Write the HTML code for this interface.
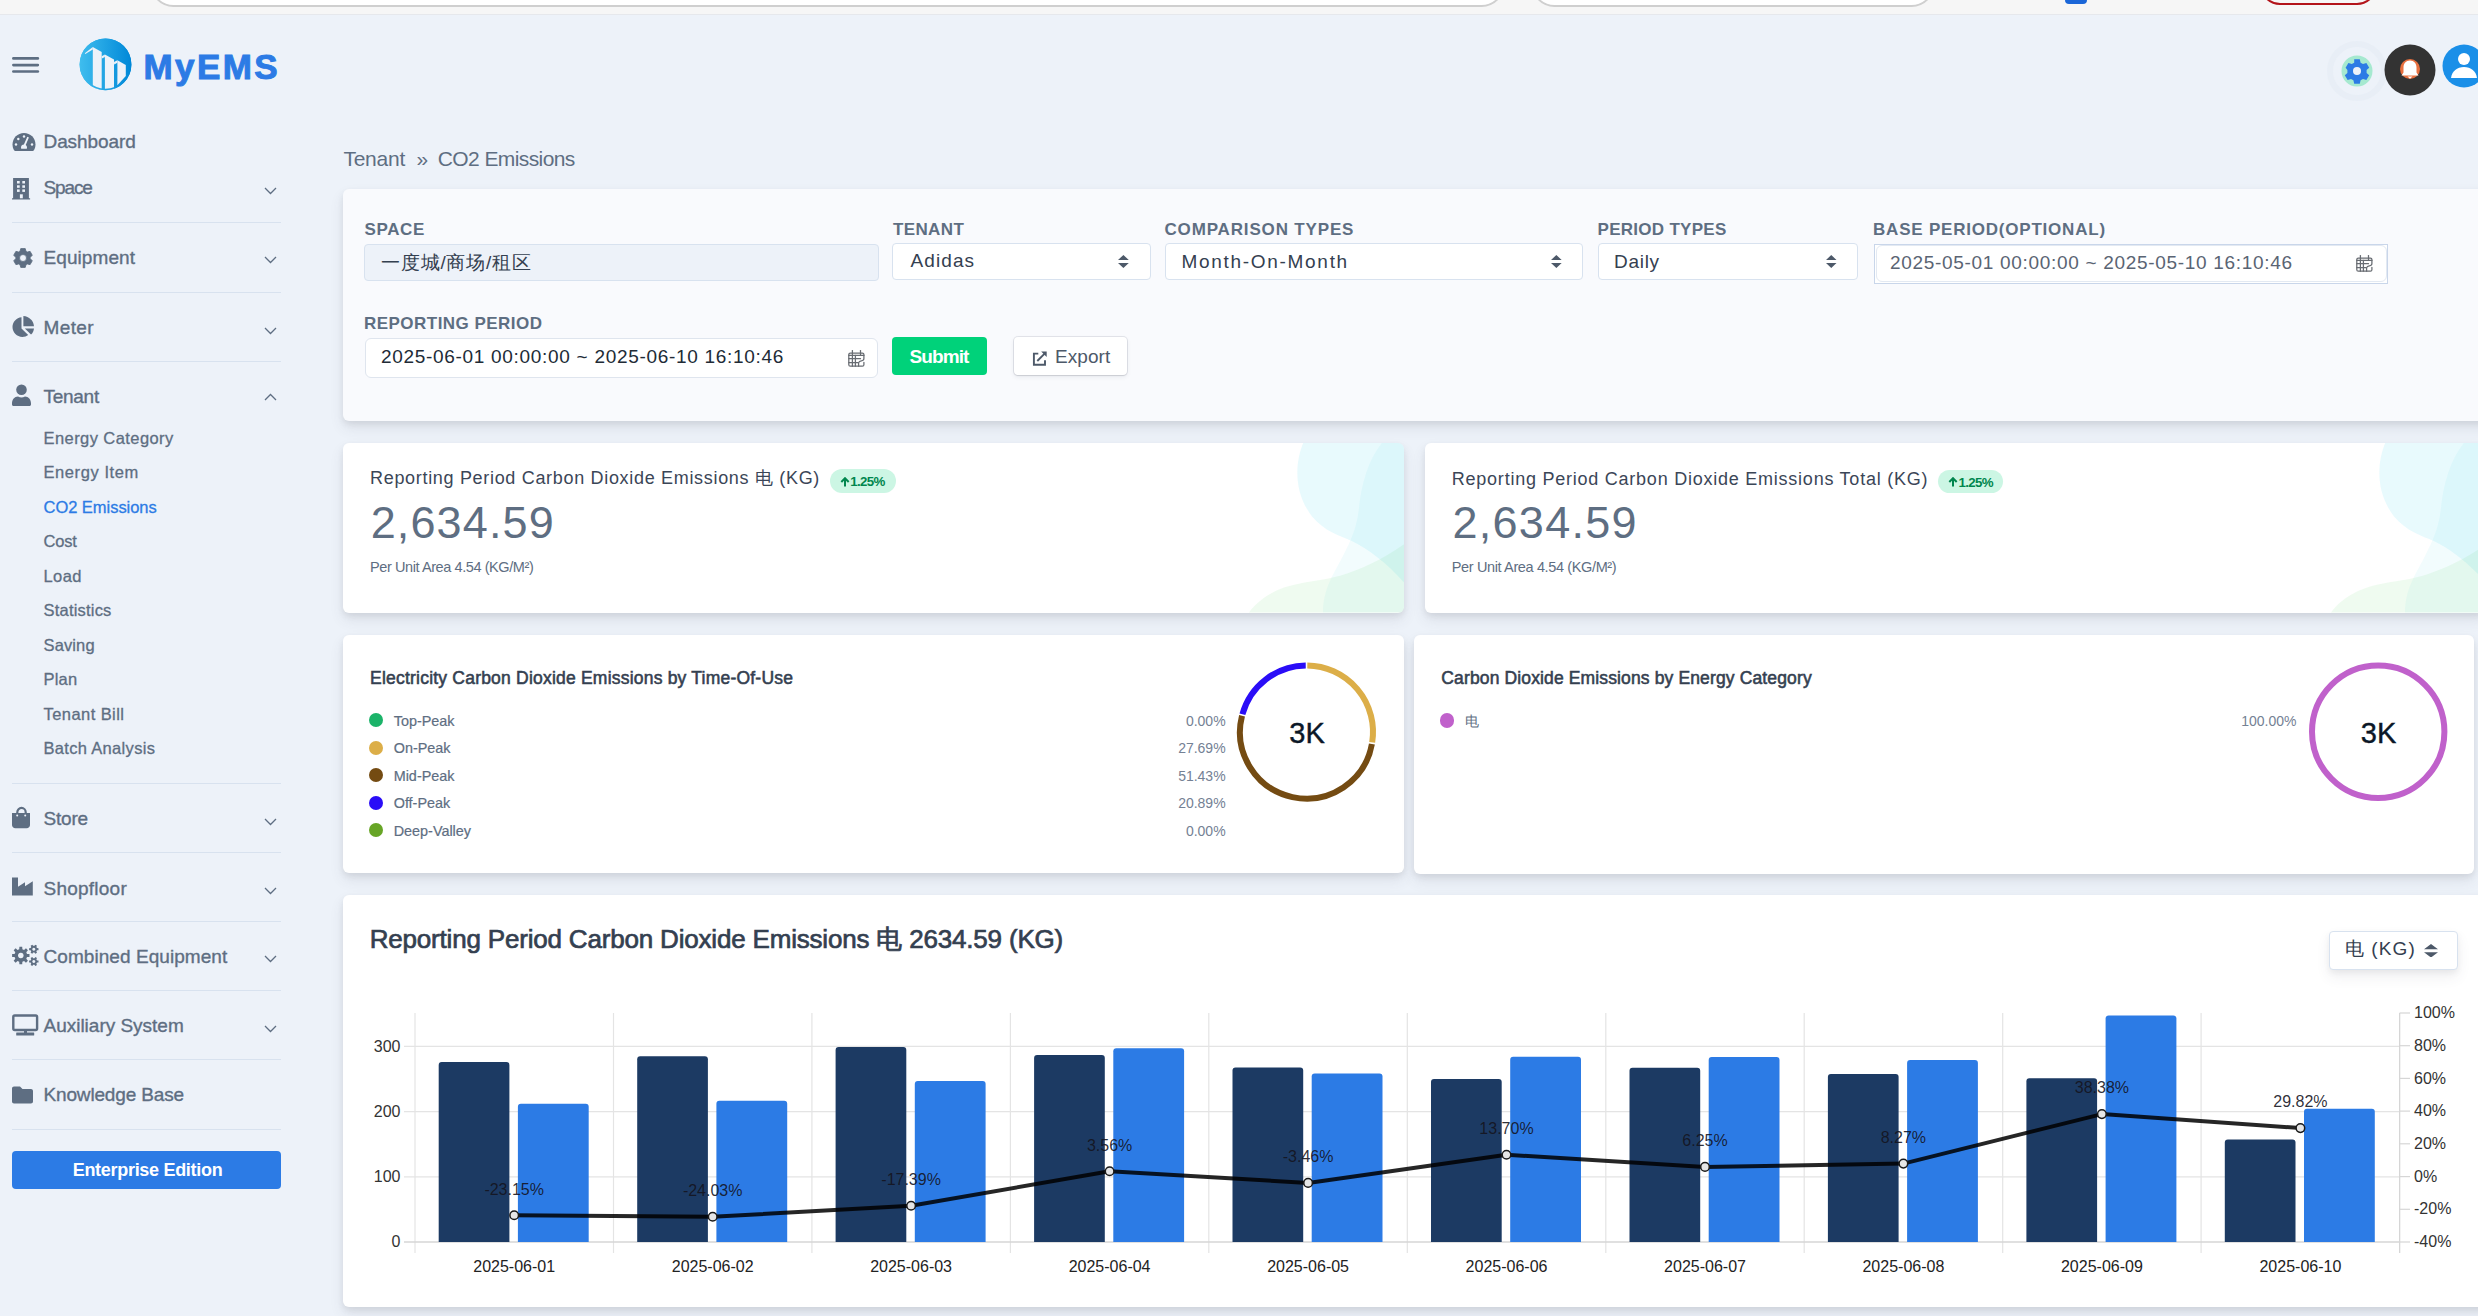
<!DOCTYPE html>
<html><head><meta charset="utf-8">
<style>
*{box-sizing:border-box;margin:0;padding:0}
html,body{width:2478px;height:1316px;overflow:hidden}
body{background:#edf2f9;font-family:"Liberation Sans",sans-serif;position:relative;color:#5e6e82}
.a{position:absolute;white-space:nowrap;line-height:normal}
.topbar{position:absolute;left:0;top:0;width:2478px;height:15px;background:#f6f6f6;border-bottom:1px solid #e6e8ec;overflow:hidden}
.nav{font-size:19px;color:#5e6e82;-webkit-text-stroke:0.35px #5e6e82}
.sub{font-size:16.5px;color:#5e6e82;-webkit-text-stroke:0.3px #5e6e82}
.div{position:absolute;left:12px;width:269px;height:1px;background:#d8e2ef}
.chev{position:absolute;left:264px;width:13px;height:8px}
.card{position:absolute;background:#fff;border-radius:6px;box-shadow:0 7px 14px 0 rgba(65,69,88,.1),0 3px 6px 0 rgba(0,0,0,.07)}
</style></head>
<body>
<!-- top browser strip -->
<div class="topbar">
  <div style="position:absolute;left:150px;top:-40px;width:1355px;height:47px;border:2px solid #cfcfcf;border-radius:24px;background:#fff"></div>
  <div style="position:absolute;left:1531px;top:-40px;width:404px;height:47px;border:2px solid #cfcfcf;border-radius:24px;background:#fff"></div>
  <div style="position:absolute;left:2065px;top:-10px;width:22px;height:14px;border-radius:4px;background:#1a66d8"></div>
  <div style="position:absolute;left:2260px;top:-40px;width:117px;height:45px;border:2px solid #b3141a;border-radius:20px"></div>
</div>

<!-- header -->
<svg class="a" style="left:12px;top:56px" width="28" height="18" viewBox="0 0 28 18">
  <g stroke="#5d6e82" stroke-width="2.7" stroke-linecap="round"><line x1="1.4" y1="2.4" x2="25.8" y2="2.4"/><line x1="1.4" y1="9.1" x2="25.8" y2="9.1"/><line x1="1.4" y1="15.5" x2="25.8" y2="15.5"/></g>
</svg>
<svg class="a" style="left:75px;top:35px" width="60" height="60" viewBox="0 0 60 60">
  <defs><linearGradient id="lg" x1="0" y1="0" x2="1" y2="0"><stop offset="0" stop-color="#3fbdee"/><stop offset="1" stop-color="#0088d8"/></linearGradient>
  <clipPath id="cc"><circle cx="30.5" cy="29.4" r="25.9"/></clipPath></defs>
  <circle cx="30.5" cy="29.4" r="25.9" fill="url(#lg)"/>
  <g clip-path="url(#cc)" fill="#edf2f9">
  <path d="M9.8 18.2L17.8 12.1V14.6L10.3 18.9Z"/>
  <path d="M17.8 12.1L26.7 16.9V60H17.8Z"/>
  <path d="M26.7 21.2L29.9 19.6V22.1L26.9 23.5Z"/>
  <path d="M29.9 19.6L39 24.4V60H29.9Z"/>
  <path d="M39 26.9L42.4 25.3V27.8L39.2 29.4Z"/>
  <path d="M42.4 25.3L50.8 30.1V41L42.4 50.2Z"/>
  </g>
  <g fill="none" stroke="url(#lg)" stroke-width="1.6"><circle cx="30.5" cy="29.4" r="25.1"/></g>
</svg>

<!-- header right icons -->
<div class="a" style="left:2327px;top:41px;width:60px;height:60px;border-radius:50%;border:6px solid #e8eef6"></div>
<svg class="a" style="left:2341px;top:55px" width="32" height="32" viewBox="0 0 32 32">
  <circle cx="16" cy="16" r="15.5" fill="#a6e9d0"/>
  <path fill="#2c7be5" d="M13.2 4.2h5.6l.8 3.5 2.4 1.3 3.4-1.1 2.8 4.8-2.6 2.4v2.8l2.6 2.4-2.8 4.8-3.4-1.1-2.4 1.3-.8 3.5h-5.6l-.8-3.5-2.4-1.3-3.4 1.1-2.8-4.8 2.6-2.4v-2.8L4.6 12.7l2.8-4.8 3.4 1.1 2.4-1.3z"/>
  <circle cx="16" cy="16" r="4" fill="#edf2f9"/>
</svg>
<svg class="a" style="left:2384px;top:44px" width="52" height="52" viewBox="0 0 52 52">
  <circle cx="26" cy="26" r="25.5" fill="#333"/>
  <circle cx="26" cy="25" r="10" fill="#e8703f"/>
  <path d="M26 16.5c-4 0-6.5 3-6.5 7v5l-2 3h17l-2-3v-5c0-4-2.5-7-6.5-7z" fill="#fff"/>
  <path d="M23.5 32.5h5l-2.5 2.2z" fill="#fff"/>
</svg>
<svg class="a" style="left:2442px;top:44px" width="44" height="44" viewBox="0 0 44 44">
  <circle cx="22" cy="22" r="21.5" fill="#1a8fe8"/>
  <circle cx="22" cy="15" r="6" fill="#fff"/>
  <path d="M9 34c1-7 6-11 13-11s12 4 13 11z" fill="#fff"/>
</svg>

<!-- SIDEBAR -->
<svg class="a" style="left:12px;top:132px" width="24" height="20" viewBox="0 0 24 20"><path fill="#5e6e82" d="M12 1C5.6 1 .5 6.1.5 12.5c0 2.1.6 4.1 1.6 5.8.3.4.7.7 1.2.7h17.4c.5 0 .9-.3 1.2-.7 1-1.7 1.6-3.7 1.6-5.8C23.5 6.1 18.4 1 12 1z"/><g fill="#edf2f9"><circle cx="12" cy="4.5" r="1.2"/><circle cx="6.3" cy="7" r="1.2"/><circle cx="4" cy="12.5" r="1.2"/><circle cx="20" cy="12.5" r="1.2"/><path d="M15.3 4.8l1.6.7-3.2 7.5c.8.5 1.3 1.4 1.3 2.4 0 .5-.1 1-.3 1.4H9.3c-.2-.4-.3-.9-.3-1.4 0-1.6 1.3-2.9 2.9-2.9z"/></g></svg>
<svg class="a" style="left:12px;top:177.5px" width="19" height="22" viewBox="0 0 19 22"><path fill="#5e6e82" d="M1.1 0h15.8v20.3h1.2V21.5H0v-1.2h1.1z"/><g fill="#edf2f9"><rect x="5" y="3" width="2.7" height="2.5"/><rect x="10.3" y="3" width="2.7" height="2.5"/><rect x="5" y="7.3" width="2.7" height="2.5"/><rect x="10.3" y="7.3" width="2.7" height="2.5"/><rect x="5" y="11.4" width="2.7" height="2.5"/><rect x="10.3" y="11.4" width="2.7" height="2.5"/><rect x="7.9" y="16.3" width="2.9" height="4"/></g></svg>
<svg class="a" style="left:11.5px;top:246.5px" width="22" height="22" viewBox="0 0 22 22"><path fill="#5e6e82" fill-rule="evenodd" stroke="#5e6e82" stroke-width="0.8" stroke-linejoin="round" d="M7.94 4.37L8.78 1.56L13.22 1.56L14.06 4.37L15.21 5.04L18.07 4.36L20.29 8.20L18.27 10.33L18.27 11.67L20.29 13.80L18.07 17.64L15.21 16.96L14.06 17.63L13.22 20.44L8.78 20.44L7.94 17.63L6.79 16.96L3.93 17.64L1.71 13.80L3.73 11.67L3.73 10.33L1.71 8.20L3.93 4.36L6.79 5.04Z M14.50 11.00A3.5 3.5 0 1 0 7.50 11.00A3.5 3.5 0 1 0 14.50 11.00Z"/></svg>
<svg class="a" style="left:12px;top:316px" width="23" height="21" viewBox="0 0 23 21"><path fill="#5e6e82" d="M9.5 1.3C4.4 1.8.5 6 .5 11.1c0 5.4 4.4 9.9 9.9 9.9 2.2 0 4.2-.7 5.8-1.9L9.5 12.4z"/><path fill="#5e6e82" d="M11.4 0v10.2h10.6C21.5 4.6 17.1.4 11.4 0z"/><path fill="#5e6e82" d="M12.8 12.4l6.2 6.2c1.6-1.6 2.7-3.8 3-6.2z"/></svg>
<svg class="a" style="left:12px;top:384px" width="20" height="23" viewBox="0 0 20 23"><circle cx="9.5" cy="5.8" r="5.3" fill="#5e6e82"/><path fill="#5e6e82" d="M0 19.5C0 15.5 2.5 12.5 6 12.5c1.3.6 2.3 1 3.5 1s2.2-.4 3.5-1c3.5 0 6 3 6 7v1c0 .9-.7 1.5-1.5 1.5H1.5C.7 22 0 21.4 0 20.5z"/></svg>
<svg class="a" style="left:12px;top:806px" width="19" height="23" viewBox="0 0 19 23"><path fill="none" stroke="#5e6e82" stroke-width="2.2" d="M5.3 9V6.2c0-2.4 1.9-4.3 4.2-4.3s4.2 1.9 4.2 4.3V9"/><path fill="#5e6e82" d="M0 7h18v12c0 2-1.5 3.2-3.3 3.2H3.3C1.5 22.2 0 21 0 19z"/><circle cx="5.2" cy="9.5" r="1" fill="#edf2f9"/><circle cx="13.2" cy="9.5" r="1" fill="#edf2f9"/></svg>
<svg class="a" style="left:12px;top:877px" width="22" height="20" viewBox="0 0 22 20"><path fill="#5e6e82" d="M0 .5h6v9.3l7-4.5v4l7.8-5V18.6H0z"/></svg>
<svg class="a" style="left:12px;top:944px" width="28" height="23" viewBox="0 0 28 23"><path fill="#5e6e82" fill-rule="evenodd" d="M15.00 9.92L17.49 10.10L17.49 12.90L15.00 13.08L14.30 14.77L15.93 16.65L13.95 18.63L12.07 17.00L10.38 17.70L10.20 20.19L7.40 20.19L7.22 17.70L5.53 17.00L3.65 18.63L1.67 16.65L3.30 14.77L2.60 13.08L0.11 12.90L0.11 10.10L2.60 9.92L3.30 8.23L1.67 6.35L3.65 4.37L5.53 6.00L7.22 5.30L7.40 2.81L10.20 2.81L10.38 5.30L12.07 6.00L13.95 4.37L15.93 6.35L14.30 8.23Z M8.8 8.7a2.8 2.8 0 1 0 0.001 0Z"/><path fill="#5e6e82" fill-rule="evenodd" d="M25.02 4.11L26.50 4.21L26.50 6.19L25.02 6.29L24.35 7.45L25.01 8.77L23.29 9.76L22.47 8.53L21.13 8.53L20.31 9.76L18.59 8.77L19.25 7.45L18.58 6.29L17.10 6.19L17.10 4.21L18.58 4.11L19.25 2.95L18.59 1.63L20.31 0.64L21.13 1.87L22.47 1.87L23.29 0.64L25.01 1.63L24.35 2.95Z M21.8 3.7a1.5 1.5 0 1 0 0.001 0Z"/><path fill="#5e6e82" fill-rule="evenodd" d="M25.02 16.41L26.50 16.51L26.50 18.49L25.02 18.59L24.35 19.75L25.01 21.07L23.29 22.06L22.47 20.83L21.13 20.83L20.31 22.06L18.59 21.07L19.25 19.75L18.58 18.59L17.10 18.49L17.10 16.51L18.58 16.41L19.25 15.25L18.59 13.93L20.31 12.94L21.13 14.17L22.47 14.17L23.29 12.94L25.01 13.93L24.35 15.25Z M21.8 16a1.5 1.5 0 1 0 0.001 0Z"/></svg>
<svg class="a" style="left:12px;top:1014px" width="27" height="23" viewBox="0 0 27 23"><rect x="1.3" y="1.5" width="23.8" height="14.5" rx="1.4" fill="none" stroke="#5e6e82" stroke-width="2.4"/><rect x="12" y="16" width="3" height="3" fill="#5e6e82"/><rect x="4.2" y="18.5" width="18" height="3" rx="0.5" fill="#5e6e82"/></svg>
<svg class="a" style="left:12px;top:1086px" width="22" height="18" viewBox="0 0 22 18"><path fill="#5e6e82" d="M0 2.5C0 1.4.9.5 2 .5h6l2.5 2.5H19c1.1 0 2 .9 2 2v10.5c0 1.1-.9 2-2 2H2c-1.1 0-2-.9-2-2z"/></svg>
<svg class="a" style="left:264px;top:187.0px" width="13" height="8" viewBox="0 0 13 8"><path d="M1 1L6.5 6.5L12 1" fill="none" stroke="#5e6e82" stroke-width="1.3"/></svg>
<div class="div" style="top:221.7px"></div>
<svg class="a" style="left:264px;top:256.2px" width="13" height="8" viewBox="0 0 13 8"><path d="M1 1L6.5 6.5L12 1" fill="none" stroke="#5e6e82" stroke-width="1.3"/></svg>
<div class="div" style="top:291.8px"></div>
<svg class="a" style="left:264px;top:326.7px" width="13" height="8" viewBox="0 0 13 8"><path d="M1 1L6.5 6.5L12 1" fill="none" stroke="#5e6e82" stroke-width="1.3"/></svg>
<div class="div" style="top:361.1px"></div>
<svg class="a" style="left:264px;top:392.5px" width="13" height="8" viewBox="0 0 13 8"><path d="M1 7L6.5 1.5L12 7" fill="none" stroke="#5e6e82" stroke-width="1.3"/></svg>
<div class="div" style="top:782.8px"></div>
<svg class="a" style="left:264px;top:817.7px" width="13" height="8" viewBox="0 0 13 8"><path d="M1 1L6.5 6.5L12 1" fill="none" stroke="#5e6e82" stroke-width="1.3"/></svg>
<div class="div" style="top:852.0px"></div>
<svg class="a" style="left:264px;top:887.2px" width="13" height="8" viewBox="0 0 13 8"><path d="M1 1L6.5 6.5L12 1" fill="none" stroke="#5e6e82" stroke-width="1.3"/></svg>
<div class="div" style="top:920.5px"></div>
<svg class="a" style="left:264px;top:955.1px" width="13" height="8" viewBox="0 0 13 8"><path d="M1 1L6.5 6.5L12 1" fill="none" stroke="#5e6e82" stroke-width="1.3"/></svg>
<div class="div" style="top:990.0px"></div>
<svg class="a" style="left:264px;top:1024.5px" width="13" height="8" viewBox="0 0 13 8"><path d="M1 1L6.5 6.5L12 1" fill="none" stroke="#5e6e82" stroke-width="1.3"/></svg>
<div class="div" style="top:1059.2px"></div>
<div class="div" style="top:1128.7px"></div>


<!-- MAIN -->
<div class="a" style="letter-spacing:2.370px;left:143.6px;top:48.5px;line-height:1;font-size:35px;font-weight:700;color:#2c7be5;-webkit-text-stroke:1px #2c7be5">MyEMS</div>
<div class="a" style="letter-spacing:-0.085px;left:43.5px;top:132.2px;line-height:1;font-size:19px;font-weight:400;color:#5e6e82;-webkit-text-stroke:0.35px #5e6e82">Dashboard</div>
<div class="a" style="letter-spacing:-1.127px;left:43.5px;top:178.3px;line-height:1;font-size:19px;font-weight:400;color:#5e6e82;-webkit-text-stroke:0.35px #5e6e82">Space</div>
<div class="a" style="letter-spacing:0.081px;left:43.5px;top:247.5px;line-height:1;font-size:19px;font-weight:400;color:#5e6e82;-webkit-text-stroke:0.35px #5e6e82">Equipment</div>
<div class="a" style="letter-spacing:0.390px;left:43.5px;top:318.1px;line-height:1;font-size:19px;font-weight:400;color:#5e6e82;-webkit-text-stroke:0.35px #5e6e82">Meter</div>
<div class="a" style="letter-spacing:-0.274px;left:43.5px;top:386.9px;line-height:1;font-size:19px;font-weight:400;color:#5e6e82;-webkit-text-stroke:0.35px #5e6e82">Tenant</div>
<div class="a" style="letter-spacing:-0.211px;left:43.5px;top:809.1px;line-height:1;font-size:19px;font-weight:400;color:#5e6e82;-webkit-text-stroke:0.35px #5e6e82">Store</div>
<div class="a" style="letter-spacing:0.237px;left:43.5px;top:878.6px;line-height:1;font-size:19px;font-weight:400;color:#5e6e82;-webkit-text-stroke:0.35px #5e6e82">Shopfloor</div>
<div class="a" style="letter-spacing:0.062px;left:43.5px;top:946.5px;line-height:1;font-size:19px;font-weight:400;color:#5e6e82;-webkit-text-stroke:0.35px #5e6e82">Combined Equipment</div>
<div class="a" style="letter-spacing:-0.013px;left:43.5px;top:1015.9px;line-height:1;font-size:19px;font-weight:400;color:#5e6e82;-webkit-text-stroke:0.35px #5e6e82">Auxiliary System</div>
<div class="a" style="letter-spacing:-0.157px;left:43.5px;top:1085.4px;line-height:1;font-size:19px;font-weight:400;color:#5e6e82;-webkit-text-stroke:0.35px #5e6e82">Knowledge Base</div>
<div class="a" style="letter-spacing:0.424px;left:43.5px;top:429.8px;line-height:1;font-size:16.5px;font-weight:400;color:#5e6e82;-webkit-text-stroke:0.3px #5e6e82">Energy Category</div>
<div class="a" style="letter-spacing:0.579px;left:43.5px;top:463.8px;line-height:1;font-size:16.5px;font-weight:400;color:#5e6e82;-webkit-text-stroke:0.3px #5e6e82">Energy Item</div>
<div class="a" style="letter-spacing:-0.037px;left:43.5px;top:498.8px;line-height:1;font-size:16.5px;font-weight:400;color:#2c7be5;-webkit-text-stroke:0.3px #2c7be5">CO2 Emissions</div>
<div class="a" style="letter-spacing:-0.181px;left:43.5px;top:532.6px;line-height:1;font-size:16.5px;font-weight:400;color:#5e6e82;-webkit-text-stroke:0.3px #5e6e82">Cost</div>
<div class="a" style="letter-spacing:0.390px;left:43.5px;top:567.7px;line-height:1;font-size:16.5px;font-weight:400;color:#5e6e82;-webkit-text-stroke:0.3px #5e6e82">Load</div>
<div class="a" style="letter-spacing:0.204px;left:43.5px;top:601.5px;line-height:1;font-size:16.5px;font-weight:400;color:#5e6e82;-webkit-text-stroke:0.3px #5e6e82">Statistics</div>
<div class="a" style="letter-spacing:0.125px;left:43.5px;top:636.7px;line-height:1;font-size:16.5px;font-weight:400;color:#5e6e82;-webkit-text-stroke:0.3px #5e6e82">Saving</div>
<div class="a" style="letter-spacing:0.217px;left:43.5px;top:670.9px;line-height:1;font-size:16.5px;font-weight:400;color:#5e6e82;-webkit-text-stroke:0.3px #5e6e82">Plan</div>
<div class="a" style="letter-spacing:0.434px;left:43.5px;top:705.8px;line-height:1;font-size:16.5px;font-weight:400;color:#5e6e82;-webkit-text-stroke:0.3px #5e6e82">Tenant Bill</div>
<div class="a" style="letter-spacing:0.318px;left:43.5px;top:739.6px;line-height:1;font-size:16.5px;font-weight:400;color:#5e6e82;-webkit-text-stroke:0.3px #5e6e82">Batch Analysis</div>
<div class="a" style="left:12px;top:1151px;width:269px;height:38px;border-radius:4px;background:#2c7be5"></div>
<div class="a" style="letter-spacing:-0.296px;left:72.7px;top:1161.4px;line-height:1;font-size:18px;font-weight:700;color:#fff;">Enterprise Edition</div>
<div class="a" style="letter-spacing:-0.243px;left:343.4px;top:147.6px;line-height:1;font-size:21px;font-weight:400;color:#5e6e82;">Tenant</div>
<div class="a" style="left:416.6px;top:147.6px;line-height:1;font-size:21px;font-weight:400;color:#5e6e82;">&raquo;</div>
<div class="a" style="letter-spacing:-0.600px;left:437.8px;top:147.6px;line-height:1;font-size:21px;font-weight:400;color:#5e6e82;">CO2 Emissions</div>
<div class="card" style="left:343px;top:189px;width:2200px;height:232px;background:#f9fafd"></div>
<div class="a" style="letter-spacing:0.608px;left:364.6px;top:220.6px;line-height:1;font-size:17px;font-weight:700;color:#5e6e82;">SPACE</div>
<div class="a" style="letter-spacing:0.369px;left:893.0px;top:220.6px;line-height:1;font-size:17px;font-weight:700;color:#5e6e82;">TENANT</div>
<div class="a" style="letter-spacing:0.841px;left:1164.5px;top:220.6px;line-height:1;font-size:17px;font-weight:700;color:#5e6e82;">COMPARISON TYPES</div>
<div class="a" style="letter-spacing:0.291px;left:1597.5px;top:220.6px;line-height:1;font-size:17px;font-weight:700;color:#5e6e82;">PERIOD TYPES</div>
<div class="a" style="letter-spacing:0.789px;left:1873.0px;top:220.6px;line-height:1;font-size:17px;font-weight:700;color:#5e6e82;">BASE PERIOD(OPTIONAL)</div>
<div class="a" style="letter-spacing:0.468px;left:364.0px;top:314.8px;line-height:1;font-size:17px;font-weight:700;color:#5e6e82;">REPORTING PERIOD</div>
<div class="a" style="left:364.0px;top:243.5px;width:514.5px;height:37.0px;background:#edf2f9;border:1px solid #d8e2ef;border-radius:4px;"></div>
<div class="a" style="letter-spacing:0.755px;left:381.2px;top:252.8px;line-height:1;font-size:19px;font-weight:400;color:#344050;">一度城/商场/租区</div>
<div class="a" style="left:892.2px;top:243.2px;width:258.4px;height:37.3px;background:#fff;border:1px solid #d8e2ef;border-radius:4px;"></div>
<div class="a" style="letter-spacing:1.081px;left:910.6px;top:251.0px;line-height:1;font-size:19px;font-weight:400;color:#344050;">Adidas</div>
<svg class="a" style="left:1118.0px;top:255.0px" width="10.8" height="13.0" viewBox="0 0 11 13" preserveAspectRatio="none"><path fill="#4d5969" d="M5.5 0L11 5H0z M0 8h11L5.5 13z"/></svg>
<div class="a" style="left:1165.0px;top:243.2px;width:418.0px;height:37.3px;background:#fff;border:1px solid #d8e2ef;border-radius:4px;"></div>
<div class="a" style="letter-spacing:1.689px;left:1181.6px;top:251.5px;line-height:1;font-size:19px;font-weight:400;color:#344050;">Month-On-Month</div>
<svg class="a" style="left:1550.9px;top:255.0px" width="10.7" height="13.0" viewBox="0 0 11 13" preserveAspectRatio="none"><path fill="#4d5969" d="M5.5 0L11 5H0z M0 8h11L5.5 13z"/></svg>
<div class="a" style="left:1597.5px;top:243.2px;width:260.5px;height:37.3px;background:#fff;border:1px solid #d8e2ef;border-radius:4px;"></div>
<div class="a" style="letter-spacing:0.717px;left:1614.0px;top:251.5px;line-height:1;font-size:19px;font-weight:400;color:#344050;">Daily</div>
<svg class="a" style="left:1826.0px;top:255.0px" width="10.5" height="13.0" viewBox="0 0 11 13" preserveAspectRatio="none"><path fill="#4d5969" d="M5.5 0L11 5H0z M0 8h11L5.5 13z"/></svg>
<div class="a" style="left:1873.5px;top:243.5px;width:514.8px;height:40.3px;background:#fff;border:1px solid #c9d6ea;border-radius:0px;"></div>
<div class="a" style="left:1875.5px;top:245.0px;width:511.0px;height:37.3px;background:#fff;border:1px solid #e3e9f2;border-radius:6px;"></div>
<div class="a" style="letter-spacing:0.691px;left:1889.9px;top:253.0px;line-height:1;font-size:19px;font-weight:400;color:#5a6473;">2025-05-01 00:00:00 ~ 2025-05-10 16:10:46</div>
<svg class="a" style="left:2356.0px;top:255.0px" width="17" height="17" viewBox="0 0 17 17"><g fill="none" stroke="#686c72" stroke-width="1.25" stroke-linecap="round"><path d="M10.6 16.2H2.3Q0.8 16.2 0.8 14.7V4.6Q0.8 3.1 2.3 3.1H14.4Q15.9 3.1 15.9 4.6V8.6Q15.9 10.6 13.4 10.9Q11 11.2 10.6 12.8Z"/><path d="M15.9 12.3V14.7Q15.9 16.2 14.4 16.2H10.6"/><line x1="0.8" y1="5.4" x2="15.9" y2="5.4"/><line x1="4.4" y1="0.6" x2="4.4" y2="4.6"/><line x1="12.5" y1="0.6" x2="12.5" y2="4.6"/><line x1="0.8" y1="8.7" x2="12.5" y2="8.7"/><line x1="0.8" y1="12.6" x2="10.2" y2="12.6"/><line x1="4.4" y1="5.4" x2="4.4" y2="16.2"/><line x1="7.4" y1="5.4" x2="7.4" y2="16.2"/></g></svg>
<div class="a" style="left:365.0px;top:338.0px;width:512.7px;height:39.7px;background:#fff;border:1px solid #dfe5ee;border-radius:6px;"></div>
<div class="a" style="letter-spacing:0.701px;left:380.9px;top:347.2px;line-height:1;font-size:19px;font-weight:400;color:#212b36;">2025-06-01 00:00:00 ~ 2025-06-10 16:10:46</div>
<svg class="a" style="left:848.0px;top:350.0px" width="17" height="17" viewBox="0 0 17 17"><g fill="none" stroke="#686c72" stroke-width="1.25" stroke-linecap="round"><path d="M10.6 16.2H2.3Q0.8 16.2 0.8 14.7V4.6Q0.8 3.1 2.3 3.1H14.4Q15.9 3.1 15.9 4.6V8.6Q15.9 10.6 13.4 10.9Q11 11.2 10.6 12.8Z"/><path d="M15.9 12.3V14.7Q15.9 16.2 14.4 16.2H10.6"/><line x1="0.8" y1="5.4" x2="15.9" y2="5.4"/><line x1="4.4" y1="0.6" x2="4.4" y2="4.6"/><line x1="12.5" y1="0.6" x2="12.5" y2="4.6"/><line x1="0.8" y1="8.7" x2="12.5" y2="8.7"/><line x1="0.8" y1="12.6" x2="10.2" y2="12.6"/><line x1="4.4" y1="5.4" x2="4.4" y2="16.2"/><line x1="7.4" y1="5.4" x2="7.4" y2="16.2"/></g></svg>
<div class="a" style="left:892px;top:337px;width:95px;height:38px;background:#00d27a;border-radius:4px"></div>
<div class="a" style="letter-spacing:-0.872px;left:909.4px;top:347.2px;line-height:1;font-size:19px;font-weight:700;color:#fff;">Submit</div>
<div class="a" style="left:1014px;top:337px;width:113.2px;height:38.2px;background:#fff;border-radius:4px;box-shadow:0 0 0 1px rgba(43,45,80,.1),0 2px 5px 0 rgba(43,45,80,.08),0 1px 1.5px 0 rgba(0,0,0,.07)"></div>
<svg class="a" style="left:1032px;top:350px" width="16" height="16" viewBox="0 0 16 16"><path d="M6.3 3.6H1.9V14.7H13V10.3" fill="none" stroke="#4d5969" stroke-width="1.9"/><path d="M5.3 11L12.6 3.7" fill="none" stroke="#4d5969" stroke-width="1.9"/><path d="M9.2 1.4H14.7V6.9Z" fill="#4d5969"/></svg>
<div class="a" style="letter-spacing:0.073px;left:1055.0px;top:347.2px;line-height:1;font-size:19px;font-weight:400;color:#4d5969;">Export</div>
<div class="card" style="left:343.2px;top:443.2px;width:1060.5px;height:169.4px;overflow:hidden"><svg style="position:absolute;left:886.8px;top:0" width="180" height="169.4" viewBox="0 3 180 169.6" preserveAspectRatio="none">
<path fill="#00c8e6" fill-opacity="0.09" d="M73.2 3C66 20 62 50 82 76.6C95 92 110 96 121.7 101C140 110 160 125 180 150V3Z"/>
<path fill="#00bcd4" fill-opacity="0.05" d="M151.8 3C138 20 131 45 128.6 71C126 90 121 100 112 118C103 135 93 150 93 172.6H180V3Z"/>
<path fill="#5fd46a" fill-opacity="0.10" d="M19 172.6C28 160 45 148 71 143.5C85 141 95 140 110 136C130 130 155 119 180 100V172.6Z"/>
</svg></div>
<div class="card" style="left:1425px;top:443px;width:1061px;height:169.6px;overflow:hidden"><svg style="position:absolute;left:887.3px;top:0" width="180" height="169.6" viewBox="0 3 180 169.6" preserveAspectRatio="none">
<path fill="#00c8e6" fill-opacity="0.09" d="M73.2 3C66 20 62 50 82 76.6C95 92 110 96 121.7 101C140 110 160 125 180 150V3Z"/>
<path fill="#00bcd4" fill-opacity="0.05" d="M151.8 3C138 20 131 45 128.6 71C126 90 121 100 112 118C103 135 93 150 93 172.6H180V3Z"/>
<path fill="#5fd46a" fill-opacity="0.10" d="M19 172.6C28 160 45 148 71 143.5C85 141 95 140 110 136C130 130 155 119 180 100V172.6Z"/>
</svg></div>
<div class="a" style="letter-spacing:0.684px;left:370.0px;top:469.3px;line-height:1;font-size:18px;font-weight:400;color:#3b4657;">Reporting Period Carbon Dioxide Emissions 电 (KG)</div>
<div class="a" style="left:830.2px;top:469px;width:65.4px;height:23.7px;background:#ccf6e4;border-radius:12px"></div>
<svg class="a" style="left:839.5px;top:476.5px" width="10" height="10" viewBox="0 0 10 10"><path d="M5 9.5V1.5M1.3 5L5 1.2 8.7 5" fill="none" stroke="#00864e" stroke-width="2"/></svg>
<div class="a" style="letter-spacing:-0.645px;left:850.2px;top:475.0px;line-height:1;font-size:13.3px;font-weight:700;color:#00864e;">1.25%</div>
<div class="a" style="letter-spacing:1.123px;left:370.7px;top:500.0px;line-height:1;font-size:45px;font-weight:400;color:#5e6e82;">2,634.59</div>
<div class="a" style="letter-spacing:-0.413px;left:370.0px;top:559.9px;line-height:1;font-size:14.5px;font-weight:400;color:#5e6e82;">Per Unit Area 4.54 (KG/M&sup2;)</div>
<div class="a" style="letter-spacing:0.761px;left:1451.8px;top:469.9px;line-height:1;font-size:18px;font-weight:400;color:#3b4657;">Reporting Period Carbon Dioxide Emissions Total (KG)</div>
<div class="a" style="left:1938.4px;top:469.5px;width:65.1px;height:23.7px;background:#ccf6e4;border-radius:12px"></div>
<svg class="a" style="left:1947.7px;top:477px" width="10" height="10" viewBox="0 0 10 10"><path d="M5 9.5V1.5M1.3 5L5 1.2 8.7 5" fill="none" stroke="#00864e" stroke-width="2"/></svg>
<div class="a" style="letter-spacing:-0.645px;left:1958.4px;top:475.5px;line-height:1;font-size:13.3px;font-weight:700;color:#00864e;">1.25%</div>
<div class="a" style="letter-spacing:1.266px;left:1452.5px;top:499.5px;line-height:1;font-size:45px;font-weight:400;color:#5e6e82;">2,634.59</div>
<div class="a" style="letter-spacing:-0.369px;left:1451.8px;top:559.9px;line-height:1;font-size:14.5px;font-weight:400;color:#5e6e82;">Per Unit Area 4.54 (KG/M&sup2;)</div>
<div class="card" style="left:343.2px;top:635.3px;width:1060.8px;height:238px"></div>
<div class="a" style="letter-spacing:0.210px;left:370.1px;top:670.0px;line-height:1;font-size:17.5px;font-weight:400;color:#344050;-webkit-text-stroke:0.55px #344050">Electricity Carbon Dioxide Emissions by Time-Of-Use</div>
<div class="a" style="left:368.9px;top:713.3px;width:14.2px;height:14.2px;border-radius:50%;background:#1bb369"></div>
<div class="a" style="left:393.7px;top:713.5px;line-height:1;font-size:14.4px;font-weight:400;color:#5e6e82;-webkit-text-stroke:0.2px #5e6e82">Top-Peak</div>
<div class="a" style="right:1252.4px;top:713.8px;line-height:1;font-size:14px;font-weight:400;color:#748194;">0.00%</div>
<div class="a" style="left:368.9px;top:740.8px;width:14.2px;height:14.2px;border-radius:50%;background:#dcae48"></div>
<div class="a" style="left:393.7px;top:741.0px;line-height:1;font-size:14.4px;font-weight:400;color:#5e6e82;-webkit-text-stroke:0.2px #5e6e82">On-Peak</div>
<div class="a" style="right:1252.4px;top:741.3px;line-height:1;font-size:14px;font-weight:400;color:#748194;">27.69%</div>
<div class="a" style="left:368.9px;top:768.3px;width:14.2px;height:14.2px;border-radius:50%;background:#744b12"></div>
<div class="a" style="left:393.7px;top:768.5px;line-height:1;font-size:14.4px;font-weight:400;color:#5e6e82;-webkit-text-stroke:0.2px #5e6e82">Mid-Peak</div>
<div class="a" style="right:1252.4px;top:768.8px;line-height:1;font-size:14px;font-weight:400;color:#748194;">51.43%</div>
<div class="a" style="left:368.9px;top:795.8px;width:14.2px;height:14.2px;border-radius:50%;background:#2a0df7"></div>
<div class="a" style="left:393.7px;top:796.0px;line-height:1;font-size:14.4px;font-weight:400;color:#5e6e82;-webkit-text-stroke:0.2px #5e6e82">Off-Peak</div>
<div class="a" style="right:1252.4px;top:796.3px;line-height:1;font-size:14px;font-weight:400;color:#748194;">20.89%</div>
<div class="a" style="left:368.9px;top:823.3px;width:14.2px;height:14.2px;border-radius:50%;background:#67a526"></div>
<div class="a" style="left:393.7px;top:823.5px;line-height:1;font-size:14.4px;font-weight:400;color:#5e6e82;-webkit-text-stroke:0.2px #5e6e82">Deep-Valley</div>
<div class="a" style="right:1252.4px;top:823.8px;line-height:1;font-size:14px;font-weight:400;color:#748194;">0.00%</div>
<svg class="a" style="left:0;top:0" width="2478" height="1316"><path d="M1307.30 665.50A66.5 66.5 0 0 1 1372.18 742.40" fill="none" stroke="#dcae48" stroke-width="6"/><path d="M1371.91 743.97A66.5 66.5 0 1 1 1242.02 715.75" fill="none" stroke="#744b12" stroke-width="6"/><path d="M1242.42 714.21A66.5 66.5 0 0 1 1305.74 665.50" fill="none" stroke="#2a0df7" stroke-width="6"/></svg>
<div class="a" style="left:1007.0px;width:600px;text-align:center;top:718.9px;line-height:1;font-size:29px;font-weight:400;color:#0b1727;-webkit-text-stroke:0.4px #0b1727">3K</div>
<div class="card" style="left:1413.9px;top:635.2px;width:1060.5px;height:238.4px"></div>
<div class="a" style="letter-spacing:0.133px;left:1441.3px;top:670.1px;line-height:1;font-size:17.5px;font-weight:400;color:#344050;-webkit-text-stroke:0.55px #344050">Carbon Dioxide Emissions by Energy Category</div>
<div class="a" style="left:1440.3px;top:713.4px;width:14.2px;height:14.2px;border-radius:50%;background:#c061cb"></div>
<div class="a" style="left:1465.2px;top:713.5px;line-height:1;font-size:14.4px;font-weight:400;color:#5e6e82;">电</div>
<div class="a" style="right:181.5px;top:713.6px;line-height:1;font-size:14px;font-weight:400;color:#748194;">100.00%</div>
<svg class="a" style="left:0;top:0" width="2478" height="1316"><circle cx="2378.2" cy="731.8" r="66.2" fill="none" stroke="#c061cb" stroke-width="6"/></svg>
<div class="a" style="left:2078.5px;width:600px;text-align:center;top:718.9px;line-height:1;font-size:29px;font-weight:400;color:#0b1727;-webkit-text-stroke:0.4px #0b1727">3K</div>
<div class="card" style="left:343px;top:895.2px;width:2200px;height:412.3px"></div>
<div class="a" style="letter-spacing:-0.186px;left:369.7px;top:926.2px;line-height:1;font-size:26px;font-weight:400;color:#344050;-webkit-text-stroke:0.7px #344050">Reporting Period Carbon Dioxide Emissions 电 2634.59 (KG)</div>
<div class="a" style="left:2328.7px;top:931.3px;width:129.1px;height:38.4px;background:#fff;border:1px solid #d8e2ef;border-radius:4px;box-shadow:0 7px 14px 0 rgba(65,69,88,.08),0 3px 6px 0 rgba(0,0,0,.05)"></div>
<div class="a" style="letter-spacing:1.128px;left:2344.8px;top:939.2px;line-height:1;font-size:19px;font-weight:400;color:#344050;">电 (KG)</div>
<svg class="a" style="left:2424.0px;top:943.5px" width="14.0" height="13.5" viewBox="0 0 11 13" preserveAspectRatio="none"><path fill="#4d5969" d="M5.5 0L11 5H0z M0 8h11L5.5 13z"/></svg>
<svg class="a" style="left:0;top:0" width="2478" height="1316"><line x1="415.0" y1="1013.0" x2="415.0" y2="1253" stroke="#e4e4e4" stroke-width="1.2"/><line x1="613.5" y1="1013.0" x2="613.5" y2="1253" stroke="#e4e4e4" stroke-width="1.2"/><line x1="811.9" y1="1013.0" x2="811.9" y2="1253" stroke="#e4e4e4" stroke-width="1.2"/><line x1="1010.4" y1="1013.0" x2="1010.4" y2="1253" stroke="#e4e4e4" stroke-width="1.2"/><line x1="1208.8" y1="1013.0" x2="1208.8" y2="1253" stroke="#e4e4e4" stroke-width="1.2"/><line x1="1407.3" y1="1013.0" x2="1407.3" y2="1253" stroke="#e4e4e4" stroke-width="1.2"/><line x1="1605.8" y1="1013.0" x2="1605.8" y2="1253" stroke="#e4e4e4" stroke-width="1.2"/><line x1="1804.2" y1="1013.0" x2="1804.2" y2="1253" stroke="#e4e4e4" stroke-width="1.2"/><line x1="2002.7" y1="1013.0" x2="2002.7" y2="1253" stroke="#e4e4e4" stroke-width="1.2"/><line x1="2201.1" y1="1013.0" x2="2201.1" y2="1253" stroke="#e4e4e4" stroke-width="1.2"/><line x1="2399.6" y1="1013.0" x2="2399.6" y2="1253" stroke="#e4e4e4" stroke-width="1.2"/><line x1="404" y1="1176.8" x2="2399.6" y2="1176.8" stroke="#e4e4e4" stroke-width="1.2"/><line x1="404" y1="1111.6" x2="2399.6" y2="1111.6" stroke="#e4e4e4" stroke-width="1.2"/><line x1="404" y1="1046.4" x2="2399.6" y2="1046.4" stroke="#e4e4e4" stroke-width="1.2"/><line x1="404" y1="1242.0" x2="2399.6" y2="1242.0" stroke="#d6d6d6" stroke-width="1.4"/><line x1="2399.6" y1="1013.0" x2="2399.6" y2="1253" stroke="#d6d6d6" stroke-width="1.2"/><line x1="2399.6" y1="1242.0" x2="2410" y2="1242.0" stroke="#d6d6d6" stroke-width="1.2"/><line x1="2399.6" y1="1209.3" x2="2410" y2="1209.3" stroke="#d6d6d6" stroke-width="1.2"/><line x1="2399.6" y1="1176.6" x2="2410" y2="1176.6" stroke="#d6d6d6" stroke-width="1.2"/><line x1="2399.6" y1="1143.8" x2="2410" y2="1143.8" stroke="#d6d6d6" stroke-width="1.2"/><line x1="2399.6" y1="1111.1" x2="2410" y2="1111.1" stroke="#d6d6d6" stroke-width="1.2"/><line x1="2399.6" y1="1078.4" x2="2410" y2="1078.4" stroke="#d6d6d6" stroke-width="1.2"/><line x1="2399.6" y1="1045.7" x2="2410" y2="1045.7" stroke="#d6d6d6" stroke-width="1.2"/><line x1="2399.6" y1="1013.0" x2="2410" y2="1013.0" stroke="#d6d6d6" stroke-width="1.2"/><path fill="#1c3a63" d="M438.7 1242.0V1065.0Q438.7 1062.0 441.7 1062.0H506.4Q509.4 1062.0 509.4 1065.0V1242.0Z"/><path fill="#2c7be5" d="M517.9 1242.0V1106.7Q517.9 1103.7 520.9 1103.7H585.7Q588.7 1103.7 588.7 1106.7V1242.0Z"/><path fill="#1c3a63" d="M637.2 1242.0V1059.2Q637.2 1056.2 640.2 1056.2H704.9Q707.9 1056.2 707.9 1059.2V1242.0Z"/><path fill="#2c7be5" d="M716.4 1242.0V1103.8Q716.4 1100.8 719.4 1100.8H784.2Q787.2 1100.8 787.2 1103.8V1242.0Z"/><path fill="#1c3a63" d="M835.6 1242.0V1050.0Q835.6 1047.0 838.6 1047.0H903.3Q906.3 1047.0 906.3 1050.0V1242.0Z"/><path fill="#2c7be5" d="M914.8 1242.0V1083.9Q914.8 1080.9 917.8 1080.9H982.6Q985.6 1080.9 985.6 1083.9V1242.0Z"/><path fill="#1c3a63" d="M1034.1 1242.0V1058.0Q1034.1 1055.0 1037.1 1055.0H1101.8Q1104.8 1055.0 1104.8 1058.0V1242.0Z"/><path fill="#2c7be5" d="M1113.3 1242.0V1051.3Q1113.3 1048.3 1116.3 1048.3H1181.1Q1184.1 1048.3 1184.1 1051.3V1242.0Z"/><path fill="#1c3a63" d="M1232.5 1242.0V1070.5Q1232.5 1067.5 1235.5 1067.5H1300.2Q1303.2 1067.5 1303.2 1070.5V1242.0Z"/><path fill="#2c7be5" d="M1311.7 1242.0V1076.5Q1311.7 1073.5 1314.7 1073.5H1379.5Q1382.5 1073.5 1382.5 1076.5V1242.0Z"/><path fill="#1c3a63" d="M1431.0 1242.0V1082.0Q1431.0 1079.0 1434.0 1079.0H1498.7Q1501.7 1079.0 1501.7 1082.0V1242.0Z"/><path fill="#2c7be5" d="M1510.2 1242.0V1059.7Q1510.2 1056.7 1513.2 1056.7H1578.0Q1581.0 1056.7 1581.0 1059.7V1242.0Z"/><path fill="#1c3a63" d="M1629.5 1242.0V1070.8Q1629.5 1067.8 1632.5 1067.8H1697.2Q1700.2 1067.8 1700.2 1070.8V1242.0Z"/><path fill="#2c7be5" d="M1708.7 1242.0V1059.9Q1708.7 1056.9 1711.7 1056.9H1776.5Q1779.5 1056.9 1779.5 1059.9V1242.0Z"/><path fill="#1c3a63" d="M1827.9 1242.0V1077.0Q1827.9 1074.0 1830.9 1074.0H1895.6Q1898.6 1074.0 1898.6 1077.0V1242.0Z"/><path fill="#2c7be5" d="M1907.1 1242.0V1063.1Q1907.1 1060.1 1910.1 1060.1H1974.9Q1977.9 1060.1 1977.9 1063.1V1242.0Z"/><path fill="#1c3a63" d="M2026.4 1242.0V1081.3Q2026.4 1078.3 2029.4 1078.3H2094.1Q2097.1 1078.3 2097.1 1081.3V1242.0Z"/><path fill="#2c7be5" d="M2105.6 1242.0V1018.5Q2105.6 1015.5 2108.6 1015.5H2173.4Q2176.4 1015.5 2176.4 1018.5V1242.0Z"/><path fill="#1c3a63" d="M2224.8 1242.0V1142.4Q2224.8 1139.4 2227.8 1139.4H2292.5Q2295.5 1139.4 2295.5 1142.4V1242.0Z"/><path fill="#2c7be5" d="M2304.0 1242.0V1111.8Q2304.0 1108.8 2307.0 1108.8H2371.8Q2374.8 1108.8 2374.8 1111.8V1242.0Z"/><polyline fill="none" stroke="rgba(0,0,0,0.85)" stroke-width="4" stroke-linejoin="round" points="514.2,1215.3 712.7,1216.7 911.1,1205.8 1109.6,1171.3 1308.1,1182.9 1506.5,1154.7 1705.0,1166.9 1903.4,1163.6 2101.9,1114.1 2300.4,1128.1"/><circle cx="514.2" cy="1215.3" r="4.3" fill="#e6e6e6" stroke="#1a1a1a" stroke-width="1.5"/><circle cx="712.7" cy="1216.7" r="4.3" fill="#e6e6e6" stroke="#1a1a1a" stroke-width="1.5"/><circle cx="911.1" cy="1205.8" r="4.3" fill="#e6e6e6" stroke="#1a1a1a" stroke-width="1.5"/><circle cx="1109.6" cy="1171.3" r="4.3" fill="#e6e6e6" stroke="#1a1a1a" stroke-width="1.5"/><circle cx="1308.1" cy="1182.9" r="4.3" fill="#e6e6e6" stroke="#1a1a1a" stroke-width="1.5"/><circle cx="1506.5" cy="1154.7" r="4.3" fill="#e6e6e6" stroke="#1a1a1a" stroke-width="1.5"/><circle cx="1705.0" cy="1166.9" r="4.3" fill="#e6e6e6" stroke="#1a1a1a" stroke-width="1.5"/><circle cx="1903.4" cy="1163.6" r="4.3" fill="#e6e6e6" stroke="#1a1a1a" stroke-width="1.5"/><circle cx="2101.9" cy="1114.1" r="4.3" fill="#e6e6e6" stroke="#1a1a1a" stroke-width="1.5"/><circle cx="2300.4" cy="1128.1" r="4.3" fill="#e6e6e6" stroke="#1a1a1a" stroke-width="1.5"/></svg>
<div class="a" style="right:2077.5px;top:1234.1px;line-height:1;font-size:16px;font-weight:400;color:#333;">0</div>
<div class="a" style="right:2077.5px;top:1168.9px;line-height:1;font-size:16px;font-weight:400;color:#333;">100</div>
<div class="a" style="right:2077.5px;top:1103.7px;line-height:1;font-size:16px;font-weight:400;color:#333;">200</div>
<div class="a" style="right:2077.5px;top:1038.5px;line-height:1;font-size:16px;font-weight:400;color:#333;">300</div>
<div class="a" style="left:2414.0px;top:1234.1px;line-height:1;font-size:16px;font-weight:400;color:#333;">-40%</div>
<div class="a" style="left:2414.0px;top:1201.4px;line-height:1;font-size:16px;font-weight:400;color:#333;">-20%</div>
<div class="a" style="left:2414.0px;top:1168.7px;line-height:1;font-size:16px;font-weight:400;color:#333;">0%</div>
<div class="a" style="left:2414.0px;top:1135.9px;line-height:1;font-size:16px;font-weight:400;color:#333;">20%</div>
<div class="a" style="left:2414.0px;top:1103.2px;line-height:1;font-size:16px;font-weight:400;color:#333;">40%</div>
<div class="a" style="left:2414.0px;top:1070.5px;line-height:1;font-size:16px;font-weight:400;color:#333;">60%</div>
<div class="a" style="left:2414.0px;top:1037.8px;line-height:1;font-size:16px;font-weight:400;color:#333;">80%</div>
<div class="a" style="left:2414.0px;top:1005.1px;line-height:1;font-size:16px;font-weight:400;color:#333;">100%</div>
<div class="a" style="left:214.2px;width:600px;text-align:center;top:1259.1px;line-height:1;font-size:16px;font-weight:400;color:#222;">2025-06-01</div>
<div class="a" style="left:412.7px;width:600px;text-align:center;top:1259.1px;line-height:1;font-size:16px;font-weight:400;color:#222;">2025-06-02</div>
<div class="a" style="left:611.1px;width:600px;text-align:center;top:1259.1px;line-height:1;font-size:16px;font-weight:400;color:#222;">2025-06-03</div>
<div class="a" style="left:809.6px;width:600px;text-align:center;top:1259.1px;line-height:1;font-size:16px;font-weight:400;color:#222;">2025-06-04</div>
<div class="a" style="left:1008.1px;width:600px;text-align:center;top:1259.1px;line-height:1;font-size:16px;font-weight:400;color:#222;">2025-06-05</div>
<div class="a" style="left:1206.5px;width:600px;text-align:center;top:1259.1px;line-height:1;font-size:16px;font-weight:400;color:#222;">2025-06-06</div>
<div class="a" style="left:1405.0px;width:600px;text-align:center;top:1259.1px;line-height:1;font-size:16px;font-weight:400;color:#222;">2025-06-07</div>
<div class="a" style="left:1603.4px;width:600px;text-align:center;top:1259.1px;line-height:1;font-size:16px;font-weight:400;color:#222;">2025-06-08</div>
<div class="a" style="left:1801.9px;width:600px;text-align:center;top:1259.1px;line-height:1;font-size:16px;font-weight:400;color:#222;">2025-06-09</div>
<div class="a" style="left:2000.4px;width:600px;text-align:center;top:1259.1px;line-height:1;font-size:16px;font-weight:400;color:#222;">2025-06-10</div>
<div class="a" style="left:214.2px;width:600px;text-align:center;top:1181.5px;line-height:1;font-size:16px;font-weight:400;color:rgba(20,20,30,0.9);">-23.15%</div>
<div class="a" style="left:412.7px;width:600px;text-align:center;top:1182.9px;line-height:1;font-size:16px;font-weight:400;color:rgba(20,20,30,0.9);">-24.03%</div>
<div class="a" style="left:611.1px;width:600px;text-align:center;top:1172.0px;line-height:1;font-size:16px;font-weight:400;color:rgba(20,20,30,0.9);">-17.39%</div>
<div class="a" style="left:809.6px;width:600px;text-align:center;top:1137.5px;line-height:1;font-size:16px;font-weight:400;color:rgba(20,20,30,0.9);">3.56%</div>
<div class="a" style="left:1008.1px;width:600px;text-align:center;top:1149.1px;line-height:1;font-size:16px;font-weight:400;color:rgba(20,20,30,0.9);">-3.46%</div>
<div class="a" style="left:1206.5px;width:600px;text-align:center;top:1120.9px;line-height:1;font-size:16px;font-weight:400;color:rgba(20,20,30,0.9);">13.70%</div>
<div class="a" style="left:1405.0px;width:600px;text-align:center;top:1133.1px;line-height:1;font-size:16px;font-weight:400;color:rgba(20,20,30,0.9);">6.25%</div>
<div class="a" style="left:1603.4px;width:600px;text-align:center;top:1129.8px;line-height:1;font-size:16px;font-weight:400;color:rgba(20,20,30,0.9);">8.27%</div>
<div class="a" style="left:1801.9px;width:600px;text-align:center;top:1080.3px;line-height:1;font-size:16px;font-weight:400;color:rgba(20,20,30,0.9);">38.38%</div>
<div class="a" style="left:2000.4px;width:600px;text-align:center;top:1094.3px;line-height:1;font-size:16px;font-weight:400;color:rgba(20,20,30,0.9);">29.82%</div>
</body></html>
